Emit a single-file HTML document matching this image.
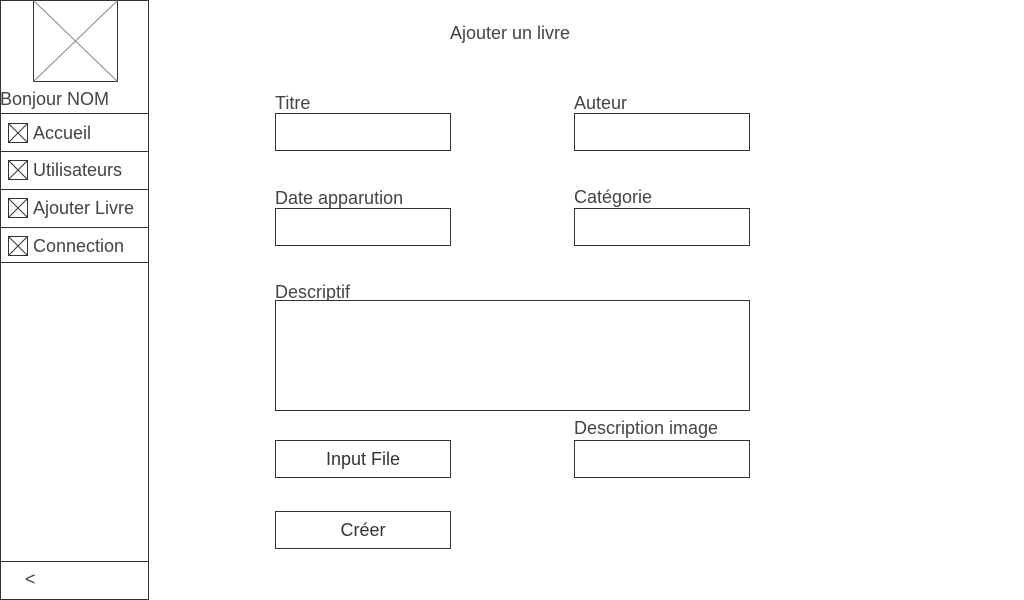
<!DOCTYPE html>
<html><head><meta charset="utf-8"><style>
body{margin:0;width:1024px;height:600px;position:relative;background:#fff;font-family:"Liberation Sans",sans-serif;color:#444;font-size:18px;overflow:hidden}
.a{position:absolute}
.b{position:absolute;border:1px solid #333;box-sizing:border-box;background:#fff}
.h{position:absolute;left:0;width:149px;height:1px;background:#333}
.t{position:absolute;white-space:nowrap;line-height:20px}
.ic{position:absolute;left:8px;width:20px;height:20px}
.btn{text-align:center;line-height:36px;color:#333}
</style></head><body>
<div class="b" style="left:0;top:0;width:149px;height:600px"></div>
<svg class="a" style="left:33px;top:0" width="85" height="82"><rect x="0.5" y="0.5" width="84" height="81" fill="none" stroke="#333"/><line x1="0.5" y1="0.5" x2="84.5" y2="81.5" stroke="#888"/><line x1="84.5" y1="0.5" x2="0.5" y2="81.5" stroke="#888"/></svg>
<div class="t" style="left:0;top:89px">Bonjour NOM</div>
<div class="h" style="top:113px"></div>
<div class="h" style="top:151px"></div>
<div class="h" style="top:189px"></div>
<div class="h" style="top:227px"></div>
<div class="h" style="top:262px"></div>
<div class="h" style="top:561px"></div>
<svg class="ic" style="top:123px"><rect x="0.5" y="0.5" width="19" height="19" fill="none" stroke="#333"/><path d="M0.5 0.5L19.5 19.5M19.5 0.5L0.5 19.5" stroke="#333"/></svg>
<div class="t" style="left:33px;top:123px">Accueil</div>
<svg class="ic" style="top:160px"><rect x="0.5" y="0.5" width="19" height="19" fill="none" stroke="#333"/><path d="M0.5 0.5L19.5 19.5M19.5 0.5L0.5 19.5" stroke="#333"/></svg>
<div class="t" style="left:33px;top:160px">Utilisateurs</div>
<svg class="ic" style="top:198px"><rect x="0.5" y="0.5" width="19" height="19" fill="none" stroke="#333"/><path d="M0.5 0.5L19.5 19.5M19.5 0.5L0.5 19.5" stroke="#333"/></svg>
<div class="t" style="left:33px;top:198px">Ajouter Livre</div>
<svg class="ic" style="top:236px"><rect x="0.5" y="0.5" width="19" height="19" fill="none" stroke="#333"/><path d="M0.5 0.5L19.5 19.5M19.5 0.5L0.5 19.5" stroke="#333"/></svg>
<div class="t" style="left:33px;top:236px">Connection</div>
<div class="t" style="left:25px;top:569px">&lt;</div>

<div class="t" style="left:450px;top:23px">Ajouter un livre</div>
<div class="t" style="left:275px;top:93px">Titre</div>
<div class="b" style="left:275px;top:113px;width:176px;height:38px"></div>
<div class="t" style="left:574px;top:93px">Auteur</div>
<div class="b" style="left:574px;top:113px;width:176px;height:38px"></div>
<div class="t" style="left:275px;top:188px">Date apparution</div>
<div class="b" style="left:275px;top:208px;width:176px;height:38px"></div>
<div class="t" style="left:574px;top:187px">Catégorie</div>
<div class="b" style="left:574px;top:208px;width:176px;height:38px"></div>
<div class="t" style="left:275px;top:282px">Descriptif</div>
<div class="b" style="left:275px;top:300px;width:475px;height:111px"></div>
<div class="t" style="left:574px;top:418px">Description image</div>
<div class="b btn" style="left:275px;top:440px;width:176px;height:38px">Input File</div>
<div class="b" style="left:574px;top:440px;width:176px;height:38px"></div>
<div class="b btn" style="left:275px;top:511px;width:176px;height:38px">Créer</div>
</body></html>
